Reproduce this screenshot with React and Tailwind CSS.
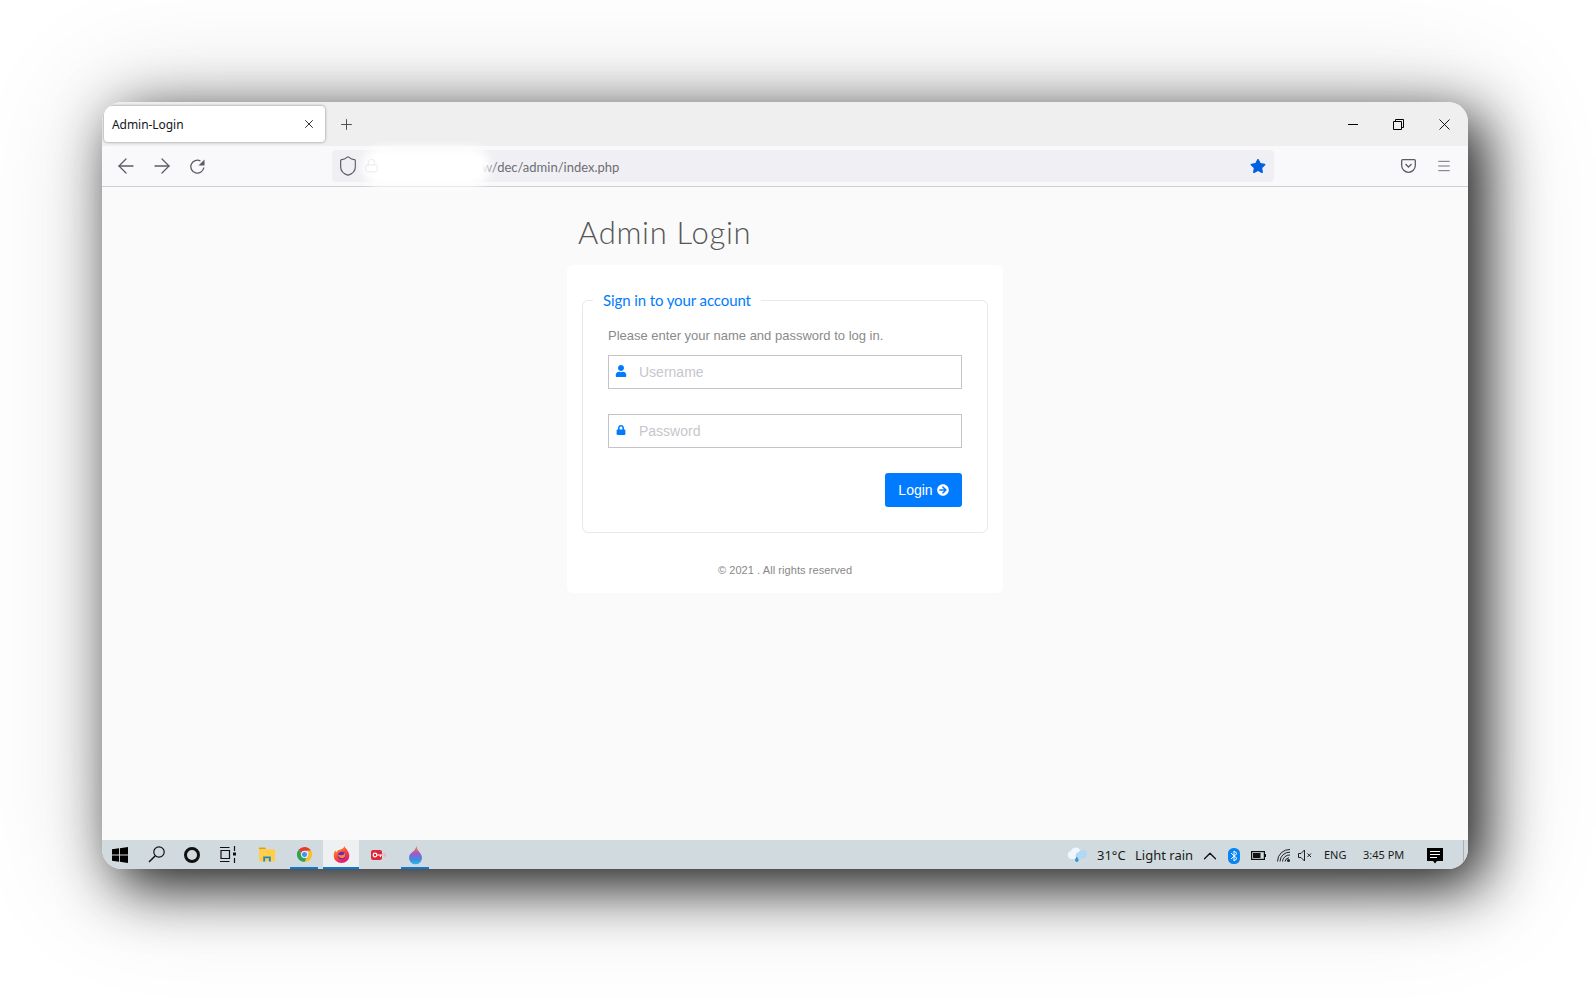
import React from 'react';
import { ArrowLeft, ArrowRight, X, Plus, Shield, Menu, ChevronUp, Lock } from 'lucide-react';
import { FaUser, FaLock, FaArrowCircleRight, FaStar } from 'react-icons/fa';

const uiFont = { fontFamily: '"Noto Sans", sans-serif' };

const WindowsLogo = () => (
  <svg width="16" height="16" viewBox="0 0 16 16" fill="#000">
    <path d="M0 2.300 7 1.300V7.500H0ZM7.900 1.200 16 0V7.500H7.900ZM0 8.400H7V14.700L0 13.700ZM7.900 8.400H16V16L7.900 14.800Z" />
  </svg>
);

const SearchIcon = () => (
  <svg width="17" height="17" viewBox="0 0 17 17" fill="none" stroke="#111" strokeWidth="1.200">
    <circle cx="11" cy="6" r="5.200" />
    <path d="M7.300 9.700 1 16" strokeWidth="1.500" />
  </svg>
);

const TaskView = () => (
  <svg width="16" height="17" viewBox="0 0 16 17" fill="none" stroke="#111" strokeWidth="1.200">
    <path d="M0 1.500H9.500M0 15.500H9.500M1 4.500H9.500V12.500H1ZM14.500 0V5M14.500 12V17" />
    <rect x="13" y="6.500" width="3" height="3" fill="#111" stroke="none" />
  </svg>
);

const FolderIcon = () => (
  <svg width="16" height="15" viewBox="0 0 17 15">
    <path d="M0 1a1 1 0 0 1 1-1h5l2 2H0Z" fill="#e0a100" />
    <path d="M0 2h16a1 1 0 0 1 1 1v11a1 1 0 0 1-1 1H1a1 1 0 0 1-1-1Z" fill="#ffcf4a" />
    <path d="M4.500 15V9.500h8V15H10.500V11.500h-4V15Z" fill="#1b86d6" />
  </svg>
);

const ChromeIcon = () => (
  <svg width="15" height="15" viewBox="0 0 24 24">
    <path d="M12 0a12 12 0 0 1 10.400 6H12a6 6 0 0 0-5.600 3.800L2.900 4.100A12 12 0 0 1 12 0Z" fill="#e33b2e" />
    <path d="M22.400 6A12 12 0 0 1 12 24l5.200-9A6 6 0 0 0 16 6Z" fill="#f9c21a" />
    <path d="M12 24A12 12 0 0 1 2.900 4.100L8 13a6 6 0 0 0 7 4.500L12 24Z" fill="#2fa34f" />
    <circle cx="12" cy="12" r="5" fill="#4a8ef0" stroke="#fff" strokeWidth="1.600" />
  </svg>
);

const FirefoxIcon = () => (
  <svg width="17" height="17" viewBox="0 0 24 24">
    <defs>
      <linearGradient id="fx" x1="0" y1="0" x2="0.6" y2="1">
        <stop offset="0" stopColor="#ffb01f" />
        <stop offset="0.55" stopColor="#ff4a3d" />
        <stop offset="1" stopColor="#e3187a" />
      </linearGradient>
    </defs>
    <path d="M16 0c.5 2.500 2.500 3 4 5.500 2.500 3.500 3 7 3 8.500a11 10 0 1 1-22 0C1 10 2 7.500 3.500 6c0 1.500.5 2.500 1.500 3 .5-2 2.500-3.500 5-4 2.500-.5 5.500-2 6-5Z" fill="url(#fx)" />
    <circle cx="12.500" cy="13.500" r="5.500" fill="#6a2bb8" />
    <path d="M7 13c2-1 4 0 6 0s3-2 2.500-3.500C18 11 18 14.500 15.500 16.500 13 18 9 17 7 13Z" fill="#ff8a2a" />
  </svg>
);

const KeyCamIcon = () => (
  <svg width="15" height="10" viewBox="0 0 15 10">
    <rect x="0" y="0" width="11" height="10" rx="2" fill="#e0283c" />
    <circle cx="4" cy="5" r="1.800" fill="none" stroke="#fff" strokeWidth="1.200" />
    <path d="M6 5H13.500M9.500 5V7M12 5V6.500" stroke="#fff" strokeWidth="1.200" />
    <path d="M11 3.500h4v3h-4" fill="#f5a3ad" opacity="0.7" />
  </svg>
);

const DropIcon = () => (
  <svg width="13" height="20" viewBox="0 0 14 20">
    <defs>
      <linearGradient id="drop" x1="0" y1="0" x2="0" y2="1">
        <stop offset="0" stopColor="#ff8a1e" />
        <stop offset="0.4" stopColor="#a855c8" />
        <stop offset="0.75" stopColor="#3a8fe0" />
        <stop offset="1" stopColor="#2fb8e8" />
      </linearGradient>
    </defs>
    <path d="M8 0c.5 2 .5 3.500 2.500 6C12.500 8.500 14 10.500 14 13a7 7 0 0 1-14 0c0-3 2-5 4-6.500C6 5 7.500 3 8 0Z" fill="url(#drop)" />
  </svg>
);

const CloudIcon = () => (
  <svg width="20" height="17" viewBox="0 0 20 17">
    <path d="M4.500 12A4 4 0 0 1 4 4.100 5 5 0 0 1 13 2.700 4.700 4.700 0 1 1 15.500 12Z" fill="#eef7fd" />
    <path d="M11 12A3.500 3.500 0 0 1 11.500 5.200 4.700 4.700 0 1 1 15.500 12Z" fill="#b5d8f0" />
    <path d="M9.800 9.500c1 1.700 1.800 2.500 1.800 3.700a1.800 1.800 0 0 1-3.600 0c0-1.200.8-2 1.800-3.700Z" fill="#3a97dc" />
  </svg>
);

const BluetoothBadge = () => (
  <svg width="12" height="16" viewBox="0 0 12 16">
    <rect width="12" height="16" rx="5.500" fill="#0a84f0" />
    <path d="M3 5 9 10.500 6 13V3l3 2.500L3 11" fill="none" stroke="#fff" strokeWidth="1" />
  </svg>
);

const BatteryIcon = () => (
  <svg width="15" height="9" viewBox="0 0 15 9">
    <rect x="0.600" y="0.600" width="12.800" height="7.800" fill="none" stroke="#111" strokeWidth="1.200" />
    <rect x="2" y="2" width="7.500" height="5" fill="#111" />
    <rect x="14" y="3" width="1" height="3" fill="#111" />
  </svg>
);

const WifiIcon = () => (
  <svg width="14" height="13" viewBox="0 0 14 13" fill="none" stroke="#222" strokeWidth="1">
    <path d="M.5 12.500A12 12 0 0 1 13 .500M3 12.500A9.500 9.500 0 0 1 13 3.200M5.500 12.500A7 7 0 0 1 13 6M8 12.500A4.500 4.500 0 0 1 12 8.800" />
    <circle cx="11.500" cy="11.500" r="1.500" fill="#222" stroke="none" />
  </svg>
);

const MutedIcon = () => (
  <svg width="14" height="13" viewBox="0 0 14 13" fill="none" stroke="#222" strokeWidth="1">
    <path d="M.5 4.500H3L6.500 1V12L3 8.500H.5ZM9.500 4.500 13 8M13 4.500 9.500 8" />
  </svg>
);

const NotifyIcon = () => (
  <svg width="16" height="16" viewBox="0 0 16 16">
    <path d="M0 0H16V13H10L8 15.500 6 13H0Z" fill="#000" />
    <path d="M3 3.500H13M3 6.500H13M3 9.500H10" stroke="#fff" strokeWidth="1" />
  </svg>
);

const PocketIcon = () => (
  <svg width="15" height="14" viewBox="0 0 15 14" fill="none" stroke="#5b5b66" strokeWidth="1.300">
    <path d="M1.600.700H13.400A.9.9 0 0 1 14.300 1.600V6.500A6.800 6.800 0 0 1 .7 6.500V1.600A.9.9 0 0 1 1.600.700Z" />
    <path d="M4.500 5 7.500 8 10.500 5" />
  </svg>
);

// firefox style reload: open ring with a solid arrow head
const ReloadIcon = () => (
  <svg width="15" height="15" viewBox="0 0 15 15" fill="none" stroke="#5b5b66" strokeWidth="1.300">
    <path d="M13.800 8.500A6.500 6.500 0 1 1 10.500 2" />
    <path d="M14.500 0.500V6.500H8.500Z" fill="#5b5b66" stroke="none" />
  </svg>
);

const TaskSlot = ({ width, ml, active, running, children }) => (
  <div
    className={`flex h-full items-center justify-center border-b-[2px] pt-[2px] ${running ? 'border-[#0f78d4]' : 'border-transparent'} ${active ? 'bg-[#eef1f2]' : ''} ${width} ${ml}`}
  >
    {children}
  </div>
);

const Field = ({ icon, placeholder, type }) => (
  <div className="flex h-[34px] items-center border border-[#c4c4c8] bg-white">
    <span className="flex w-[24px] justify-center pb-[2px] text-[#007bff]">{icon}</span>
    <input
      type={type}
      placeholder={placeholder}
      className="ml-[6px] h-full flex-1 bg-transparent text-[14px] text-[#444] outline-none placeholder:text-[#c6c6cc]"
    />
  </div>
);

export default function App() {
  return (
    <div className="h-[998px] w-[1596px] overflow-hidden bg-white pl-[102px] pt-[102px]" style={{ fontFamily: '"Liberation Sans", sans-serif' }}>
      <div className="flex h-[767px] w-[1366px] flex-col overflow-hidden rounded-[20px] shadow-[15px_16px_58px_0_rgba(0,0,0,0.9),6px_6px_120px_16px_rgba(0,0,0,0.14)]">
        {/* Tab strip */}
        <div className="flex h-[44px] shrink-0 items-center bg-[#efeff0] pl-[2px]">
          <div className="mt-[-1px] flex h-[36px] w-[221px] items-center justify-between rounded-[4px] bg-white pl-[8px] pr-[9px] shadow-[0_0_3px_rgba(0,0,0,0.45)]">
            <span className="pt-[2px] text-[12px] tracking-[-0.05px] text-[#15141a]" style={uiFont}>Admin-Login</span>
            <X size={14} strokeWidth={1.5} color="#15141a" />
          </div>
          <Plus size={17} strokeWidth={1.3} color="#444" className="ml-[13px]" />
          <div className="ml-auto flex items-center pr-[18px]">
            <div className="h-px w-[10px] bg-black" />
            <svg width="11" height="11" viewBox="0 0 11 11" fill="none" stroke="#000" className="ml-[35px]">
              <path d="M.5 2.500H8.500V10.500H.5ZM2.500 2.500V.5H10.500V8.500H8.500" />
            </svg>
            <svg width="11" height="11" viewBox="0 0 11 11" fill="none" stroke="#000" strokeWidth="0.9" className="ml-[35px]">
              <path d="M.5.5 10.500 10.500M10.500.5 .5 10.500" />
            </svg>
          </div>
        </div>

        {/* Toolbar */}
        <div className="flex h-[41px] shrink-0 items-center border-b border-[#cfcfd8] bg-[#f9f9fb] pl-[12px]">
          <ArrowLeft size={24} strokeWidth={1.3} color="#5b5b66" />
          <ArrowRight size={24} strokeWidth={1.3} color="#5b5b66" className="ml-[12px]" />
          <span className="ml-[16px] flex"><ReloadIcon /></span>
          <div className="relative ml-[127px] flex h-[32px] w-[942px] items-center rounded-[4px] bg-[#f0f0f4] pl-[5px] pr-[8px]">
            <Shield size={22} strokeWidth={1.3} color="#5b5b66" />
            <span className="ml-[123px] pt-[3px] text-[13px] text-[#6d6d75]" style={{ fontFamily: 'Lato, sans-serif' }}>w/dec/admin/index.php</span>
            {/* blurred out host name, with the padlock still showing through */}
            <div className="absolute left-[30px] top-[-3px] h-[40px] w-[128px] rounded-full bg-white blur-[5px]" />
            <Lock size={15} strokeWidth={1.2} color="#e4e4e8" className="absolute left-[32px] top-[8px]" />
            <FaStar size={16} color="#0060df" className="ml-auto" />
          </div>
          <div className="ml-auto flex items-center gap-[20px] pr-[16px]">
            <PocketIcon />
            <Menu size={16} strokeWidth={1.3} color="#5b5b66" />
          </div>
        </div>

        {/* Page */}
        <div className="flex flex-1 flex-col bg-[#fafafa]">
          <div className="mx-auto w-[436px] pt-[25px]">
            <h1 className="pl-[11px] text-[31px] font-light leading-[40px] tracking-[0.7px] text-[#555]" style={{ fontFamily: 'Lato, sans-serif' }}>Admin Login</h1>
            <div className="mt-[13px] h-[328px] rounded-[6px] bg-white px-[15px] pt-[25px]">
              <fieldset className="h-[243px] rounded-[6px] border border-[#e8e8ea] px-[25px]">
                <legend className="ml-[-15px] px-[10px] text-[15px] leading-[20px] tracking-[-0.1px] text-[#007bff]" style={{ fontFamily: 'Lato, sans-serif' }}>Sign in to your account</legend>
                <p className="mt-[18px] text-[13px] leading-[16px] text-[#8a8a8a]">Please enter your name and password to log in.</p>
                <div className="mt-[11px]">
                  <Field icon={<FaUser size={12} />} placeholder="Username" type="text" />
                </div>
                <div className="mt-[25px]">
                  <Field icon={<FaLock size={10} />} placeholder="Password" type="password" />
                </div>
                <div className="mt-[25px] flex justify-end">
                  <button className="flex h-[34px] w-[77px] items-center justify-center gap-[4px] rounded-[3px] bg-[#007bff] text-[14px] text-white">
                    Login <FaArrowCircleRight size={12} />
                  </button>
                </div>
              </fieldset>
              <p className="mt-[30px] text-center text-[11px] leading-[14px] tracking-[0.07px] text-[#888]">© 2021 . All rights reserved</p>
            </div>
          </div>
        </div>

        {/* Taskbar */}
        <div className="flex h-[29px] shrink-0 items-center bg-[#d1dade] text-[#1a1a1a]" style={uiFont}>
          <TaskSlot width="w-[16px]" ml="ml-[10px]"><WindowsLogo /></TaskSlot>
          <TaskSlot width="w-[17px]" ml="ml-[20px]"><SearchIcon /></TaskSlot>
          <TaskSlot width="w-[16px]" ml="ml-[19px]"><span className="h-[16px] w-[16px] shrink-0 rounded-full border-[3px] border-[#111]" /></TaskSlot>
          <TaskSlot width="w-[16px]" ml="ml-[20px]"><TaskView /></TaskSlot>
          <TaskSlot width="w-[16px]" ml="ml-[23px]"><FolderIcon /></TaskSlot>
          <TaskSlot width="w-[28px]" ml="ml-[15px]" running><ChromeIcon /></TaskSlot>
          <TaskSlot width="w-[36px]" ml="ml-[5px]" running active><FirefoxIcon /></TaskSlot>
          <TaskSlot width="w-[15px]" ml="ml-[12px]"><KeyCamIcon /></TaskSlot>
          <TaskSlot width="w-[28px]" ml="ml-[15px]" running><DropIcon /></TaskSlot>

          <div className="ml-[638px] flex h-full items-center pt-[2px]">
            <CloudIcon />
            <span className="ml-[10px] w-[38px] text-[13px]">31°C</span>
            <span className="w-[64px] text-[13px]">Light rain</span>
            <ChevronUp size={22} strokeWidth={1.4} color="#111" />
            <span className="ml-[7px] flex"><BluetoothBadge /></span>
            <span className="ml-[11px] flex"><BatteryIcon /></span>
            <span className="ml-[11px] flex"><WifiIcon /></span>
            <span className="ml-[7px] flex"><MutedIcon /></span>
            <span className="ml-[12px] w-[39px] text-[11px]">ENG</span>
            <span className="w-[64px] text-[11px]">3:45 PM</span>
            <NotifyIcon />
          </div>
          <div className="ml-auto mr-[4px] h-full w-px bg-[#aab2b7]" />
        </div>
      </div>
    </div>
  );
}
